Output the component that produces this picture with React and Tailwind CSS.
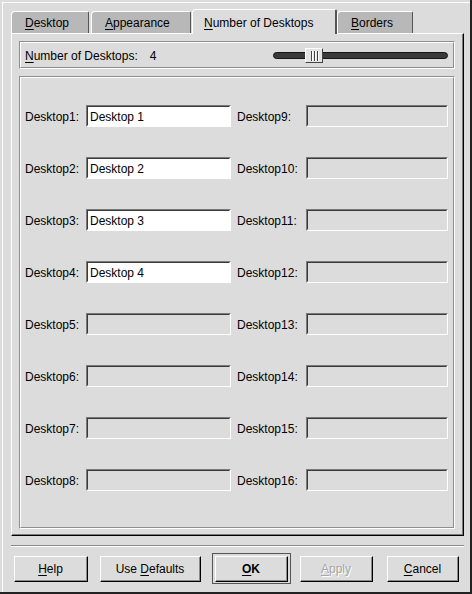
import React from "react";

function U({ children }) {
  return <span className="underline decoration-1 underline-offset-[2px]">{children}</span>;
}

function Tab({ active, className, children }) {
  if (active) {
    return (
      <div
        className={`relative z-10 -mb-px h-[25px] flex items-center bg-[#dcdcdc] border-t border-l border-r-2 border-t-white border-l-white border-r-[#555] rounded-tl-[4px] rounded-tr-[2px] pl-[11px] pt-[1px] ${className}`}
      >
        {children}
      </div>
    );
  }
  return (
    <div
      className={`h-[22px] flex items-center bg-[#b8b8b8] border-t border-l border-r border-t-white border-l-white border-r-[#555] rounded-tl-[4px] rounded-tr-[2px] pl-[13px] pt-[1px] ${className}`}
    >
      {children}
    </div>
  );
}

function Etched({ className, innerClassName, children }) {
  return (
    <div className={`border border-t-[#8e8e8e] border-l-[#8e8e8e] border-r-white border-b-white ${className}`}>
      <div className={`h-full border border-t-white border-l-white border-r-[#8e8e8e] border-b-[#8e8e8e] ${innerClassName}`}>
        {children}
      </div>
    </div>
  );
}

function Entry({ value, className }) {
  return (
    <div className={`h-[22px] border border-t-[#7a7a7a] border-l-[#7a7a7a] border-r-white border-b-white ${className}`}>
      <div
        className={`h-full flex items-center pl-[2px] pt-[1px] border border-t-[#3a3a3a] border-l-[#3a3a3a] ${
          value ? "bg-white border-r-white border-b-white" : "bg-[#dcdcdc] border-r-[#dcdcdc] border-b-[#dcdcdc]"
        }`}
      >
        {value}
      </div>
    </div>
  );
}

function Btn({ className, children }) {
  return (
    <div className={`h-[26px] border border-t-white border-l-white border-r-black border-b-black ${className}`}>
      <div className="h-full flex items-center justify-center pt-[2px] border-r border-b border-r-[#8a8a8a] border-b-[#8a8a8a]">
        {children}
      </div>
    </div>
  );
}

const names = ["Desktop 1", "Desktop 2", "Desktop 3", "Desktop 4", "", "", "", ""];

export default function App() {
  return (
    <div className="w-[472px] h-[594px] bg-[#dcdcdc] pt-[2px] pl-[2px] border-r-2 border-b-2 border-r-[#222] border-b-[#222] text-[12px] text-black font-['Liberation_Sans',Arial,Helvetica,sans-serif] leading-none">
      <div className="h-full flex flex-col border-t border-l border-t-white border-l-white">
        {/* tabs */}
        <div className="mt-[6px] pl-[8px] h-[24px] flex items-end">
          <Tab className="w-[78px]">
            <U>D</U>esktop
          </Tab>
          <Tab className="ml-[2px] w-[100px]">
            <U>A</U>ppearance
          </Tab>
          <Tab active className="ml-[1px] w-[145px]">
            <U>N</U>umber of Desktops
          </Tab>
          <Tab className="w-[76px]">
            <U>B</U>orders
          </Tab>
        </div>

        {/* notebook page */}
        <div className="ml-[8px] w-[453px] h-[503px] border border-t-white border-l-white border-r-black border-b-black">
          <div className="h-full border-r border-b border-r-[#7a7a7a] border-b-[#7a7a7a] px-[7px] pt-[7px] flex flex-col gap-[7px]">
            <Etched className="h-[28px]" innerClassName="flex items-center pl-[4px] pr-[5px]">
              <span className="pt-[1px]">
                <U>N</U>umber of Desktops:
              </span>
              <span className="ml-[12px] pt-[1px]">4</span>
              <div className="relative ml-auto w-[175px] h-[16px] flex items-center">
                <div className="w-full h-[7px] rounded-full bg-[#3a3a3a] border border-[#151515]" />
                <div className="absolute left-[32px] top-[1px] w-[18px] h-[15px] bg-[#e4e4e4] border border-t-white border-l-white border-r-[#444] border-b-[#444] flex items-center justify-center gap-[2px]">
                  <div className="w-px h-[10px] bg-[#444] shadow-[1px_0_0_white]" />
                  <div className="w-px h-[10px] bg-[#444] shadow-[1px_0_0_white]" />
                  <div className="w-px h-[10px] bg-[#444] shadow-[1px_0_0_white]" />
                </div>
              </div>
            </Etched>

            <Etched className="h-[453px]" innerClassName="flex flex-col pt-[27px] gap-[30px] pl-[4px]">
              {names.map((n, i) => (
                <div key={i} className="h-[22px] flex items-center">
                  <span className="w-[61px] pt-[1px]">Desktop{i + 1}:</span>
                  <Entry value={n} className="w-[145px]" />
                  <span className="ml-[6px] w-[69px] pt-[1px]">Desktop{i + 9}:</span>
                  <Entry value="" className="w-[142px]" />
                </div>
              ))}
            </Etched>
          </div>
        </div>

        {/* separator */}
        <div className="mt-[9px] ml-[8px] w-[453px] h-[2px] border-t border-b border-t-[#8a8a8a] border-b-white" />

        {/* buttons */}
        <div className="mt-[6px] h-[31px] flex items-center">
          <Btn className="ml-[11px] w-[74px]">
            <U>H</U>elp
          </Btn>
          <Btn className="ml-[12px] w-[101px]">
            Use&nbsp;<U>D</U>efaults
          </Btn>
          <div className="ml-[11px] w-[79px] h-[31px] border border-[#555] flex items-center justify-center">
            <Btn className="w-[73px] h-[24px] font-bold">
              <U>O</U>K
            </Btn>
          </div>
          <Btn className="ml-[9px] w-[73px]">
            <span className="text-[#a6a6a6] [text-shadow:1px_1px_0_white]">
              <U>A</U>pply
            </span>
          </Btn>
          <Btn className="ml-[14px] w-[72px]">
            <U>C</U>ancel
          </Btn>
        </div>
      </div>
    </div>
  );
}
